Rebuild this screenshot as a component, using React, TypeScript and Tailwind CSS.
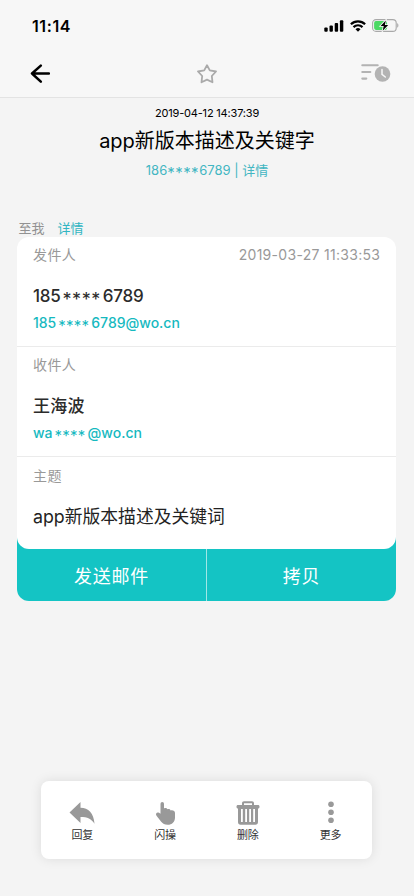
import React from "react";

function Stars({ className }: { className: string }) {
  return <span className={`relative inline-block text-center leading-none ${className}`}>****</span>;
}

function StatusBar() {
  return (
    <div className="h-[50px] shrink-0 flex items-center justify-between pt-px pl-8 pr-[15px]">
      <span className="text-[16px] leading-5 tracking-[0.6px] font-semibold text-black">11:14</span>
      <div className="flex items-center gap-[6px]">
        <svg className="w-5 h-3" viewBox="0 0 20 12">
          <rect x="0.3" y="7.5" width="3.4" height="4.3" rx="1" />
          <rect x="5.5" y="5.5" width="3.4" height="6.3" rx="1" />
          <rect x="10.7" y="2.9" width="3.4" height="8.9" rx="1" />
          <rect x="15.9" y="0.3" width="3.4" height="11.5" rx="1" />
        </svg>
        <svg className="w-4 h-3" viewBox="0 0 16 12" fill="none" stroke="black" strokeWidth="2.2">
          <path d="M0.9 4.3a10.1 10.1 0 0 1 14.2 0" />
          <path d="M3.5 7.1a6.4 6.4 0 0 1 9 0" />
          <path d="M8 11.8 5.5 9.3a3.6 3.6 0 0 1 5 0z" fill="black" stroke="none" />
        </svg>
        <svg className="w-[27px] h-[13px]" viewBox="0 0 27 13">
          <rect x="0.6" y="0.6" width="23.6" height="11.8" rx="3.4" fill="none" stroke="#a9a9a9" strokeWidth="1.1" />
          <rect x="2.1" y="2.1" width="13" height="8.8" rx="1.8" fill="#4cd964" />
          <path d="M25.2 4.3c1.6.5 1.6 3.9 0 4.4z" fill="#a9a9a9" />
          <path d="M13.8 1.4 8.6 7h3.1l-1 4.7L16.2 6h-3.3z" fill="black" stroke="#f7f7f7" strokeWidth="1.6" paintOrder="stroke" />
        </svg>
      </div>
    </div>
  );
}

function NavBar() {
  return (
    <div className="flex-1 flex items-center justify-between pl-[30px] pr-[23px]">
      <svg className="w-5 h-5" viewBox="0 0 20 20" fill="none" stroke="black" strokeWidth="2.5" strokeLinecap="round" strokeLinejoin="round">
        <path d="M10.8 1.6 2 9.5l8.8 8.2M2 9.5h17" />
      </svg>
      <svg className="w-5 h-5 ml-[2px]" viewBox="0 0 20 20" fill="none" stroke="#aaa" strokeWidth="1.8" strokeLinejoin="round">
        <path d="m10 1.2 2.8 5.2 6.2 1.1-4.2 4.5.7 6.3-5.500-2.700-5.500 2.700.7-6.300L1 7.500l6.200-1.100z" />
      </svg>
      <svg className="w-[30px] h-5" viewBox="0 0 30 20">
        <path d="M1.3 1.3h15.4M1.3 8h8M1.3 14.6h4" stroke="#b3b3b3" strokeWidth="2.1" strokeLinecap="round" />
        <circle cx="21.5" cy="10" r="7.8" fill="#b3b3b3" />
        <path d="M21 5.4v5l3.3 2.6" fill="none" stroke="#f7f7f7" strokeWidth="1.5" strokeLinecap="round" />
      </svg>
    </div>
  );
}

function Action({ label, children }: { label: string; children: React.ReactNode }) {
  return (
    <button className="flex-1 flex flex-col items-center pt-[19px]">
      <svg className="w-[26px] h-[26px]" viewBox="0 0 26 26" fill="#999">
        {children}
      </svg>
      <span className="mt-[2px] text-[11px] leading-[15px] text-[#333]">{label}</span>
    </button>
  );
}

export default function App() {
  return (
    <div className="w-full h-[896px] flex flex-col bg-[#f4f4f4] font-['Inter','Noto_Sans_CJK_SC',sans-serif] overflow-hidden">
      <header className="h-[98px] shrink-0 flex flex-col bg-[#f7f7f7] border-b border-[#e3e3e3]">
        <StatusBar />
        <NavBar />
      </header>

      <section className="h-[120px] shrink-0 flex flex-col items-center pt-[7px] text-center">
        <div className="text-[11px] leading-4 tracking-[-0.18px] text-black">2019-04-12 14:37:39</div>
        <h1 className="mt-[5px] text-[20px] leading-[30px] text-black">app新版本描述及关键字</h1>
        <div className="mt-[5px] text-[13px] leading-[18px] text-[#42b6c2]">
          186<Stars className="w-[32px] text-[15px] tracking-[0.4px] top-[3px]" />6789 | 详情
        </div>
      </section>

      <div className="h-[19px] shrink-0 flex items-center gap-[13px] pl-[18.5px] text-[13px] leading-5">
        <span className="text-[#929292]">至我</span>
        <span className="text-[#31b5c2]">详情</span>
      </div>

      <main className="mx-[17px] w-[379px] shrink-0">
        <div className="relative rounded-xl bg-white">
          <div className="h-[110px] px-4 pt-2 border-b border-[#ebebeb]">
            <div className="flex justify-between text-[14px] leading-5 text-[#999]">
              <span className="tracking-[0.4px]">发件人</span>
              <span className="tracking-[0.3px] -mr-[0.3px]">2019-03-27 11:33:53</span>
            </div>
            <div className="mt-[19px] text-[17px] leading-6 tracking-[-0.2px] font-medium text-[#2b2b2b]">
              185<Stars className="w-[42px] text-[18px] tracking-[0.6px] top-[4px] font-normal" />6789
            </div>
            <div className="mt-[5px] text-[14px] leading-5 font-medium text-[#16b9bf]">
              185<Stars className="w-[35px] text-[15px] tracking-[0.3px] top-[3px] font-normal" />6789@wo.cn
            </div>
          </div>
          <div className="h-[110px] px-4 pt-2 border-b border-[#ebebeb]">
            <div className="text-[14px] leading-5 tracking-[0.4px] text-[#999]">收件人</div>
            <div className="mt-[19px] text-[17px] leading-6 tracking-[0.2px] font-medium text-[#2b2b2b]">王海波</div>
            <div className="mt-[5px] text-[14px] leading-5 font-medium text-[#16b9bf]">
              wa<Stars className="w-[35px] text-[15px] tracking-[0.3px] top-[3px] font-normal" />@wo.cn
            </div>
          </div>
          <div className="h-[92px] px-4 pt-[9px]">
            <div className="text-[14px] leading-5 tracking-[0.4px] text-[#999]">主题</div>
            <div className="mt-[19px] text-[17.8px] leading-6 text-[#222]">app新版本描述及关键词</div>
          </div>
        </div>
        <div className="-mt-3 pt-3 h-16 flex rounded-b-xl bg-[#14c4c4] text-[18px] tracking-[0.8px] text-white">
          <button className="w-[190px] pt-[2px] border-r border-white/60">发送邮件</button>
          <button className="flex-1 pt-[2px]">拷贝</button>
        </div>
      </main>

      <nav className="mt-auto mb-[37px] ml-[41px] w-[331px] h-[78px] shrink-0 flex rounded-lg bg-white shadow-[0_0_12px_rgba(0,0,0,0.1)]">
        <Action label="回复">
          <path d="M.5 12.5 11.5 2v5.700c8 .2 13.200 5.300 14 16-3-5-7-6.800-14-6.800V23z" />
        </Action>
        <Action label="闪操">
          <path d="M8.5 3.8a1.75 1.75 0 0 1 3.5 0v4.700c1.200-.9 2.900-.4 3.400.7 1.200-.5 2.800 0 3.200 1.200 2-.6 4.400.2 4.400 2.600v4.500c0 4.500-3 7.300-7.300 7.300-3.200 0-4.700-.9-6.500-3l-4.700-6c-1.400-2 .5-4.100 2.500-3l1.500 1z" />
        </Action>
        <Action label="删除">
          <path fillRule="evenodd" d="M7 5V3.5C7 2 7.8 1.3 9 1.3h8c1.2 0 2 .7 2 2.2V5h4c1 0 1.5.7 1.5 1.7S24 8.5 23 8.5V22c0 1.7-1 2.8-2.6 2.8H5.6C4 24.8 3 23.7 3 22V8.5C2 8.5 1.5 7.7 1.5 6.7S2 5 3 5zm2-1.7V5h8V3.3zM6 9v13h1.800V9zm4.200 0v13H12V9zm4 0v13H16V9zm4 0v13H20V9z" />
        </Action>
        <Action label="更多">
          <circle cx="13" cy="4.2" r="2.8" />
          <circle cx="13" cy="12.2" r="2.8" />
          <circle cx="13" cy="20.2" r="2.8" />
        </Action>
      </nav>
    </div>
  );
}
